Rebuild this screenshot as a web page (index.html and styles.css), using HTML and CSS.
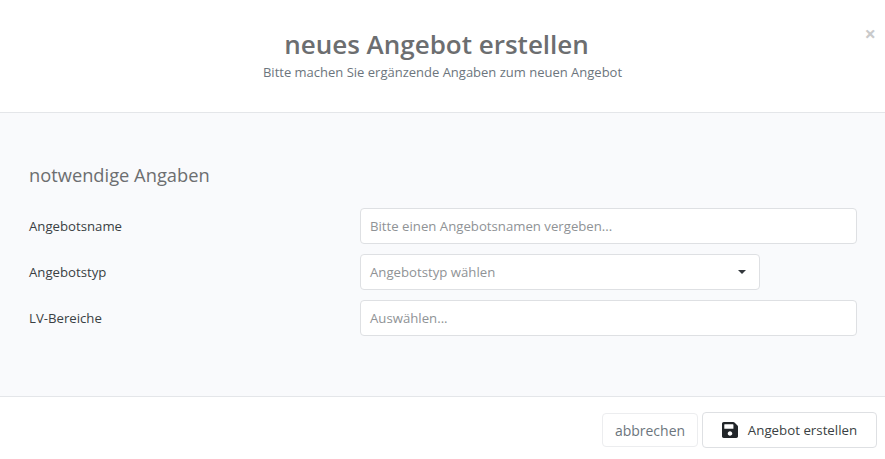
FILE: index.html
```html
<!DOCTYPE html>
<html lang="de">
<head>
<meta charset="utf-8">
<title>neues Angebot erstellen</title>
<link rel="stylesheet" href="styles.css">
</head>
<body>
<div class="modal">
  <header class="modal-header">
    <h1 class="modal-title">neues Angebot erstellen</h1>
    <p class="modal-subtitle">Bitte machen Sie ergänzende Angaben zum neuen Angebot</p>
    <span class="close">×</span>
  </header>
  <main class="modal-body">
    <h2 class="section-title">notwendige Angaben</h2>
    <div class="row">
      <label class="label">Angebotsname</label>
      <div class="field">Bitte einen Angebotsnamen vergeben...</div>
    </div>
    <div class="row">
      <label class="label">Angebotstyp</label>
      <div class="field field-select">Angebotstyp wählen<span class="caret"></span></div>
    </div>
    <div class="row">
      <label class="label">LV-Bereiche</label>
      <div class="field">Auswählen...</div>
    </div>
  </main>
  <footer class="modal-footer">
    <button class="btn btn-cancel">abbrechen</button>
    <button class="btn btn-save">
      <svg class="icon" viewBox="0 32 448 448" width="16" height="16"><path fill="#212529" d="M433.941 129.941l-83.882-83.882A48 48 0 0 0 316.118 32H48C21.490 32 0 53.490 0 80v352c0 26.510 21.490 48 48 48h352c26.510 0 48-21.490 48-48V163.882a48 48 0 0 0-14.059-33.941zM224 416c-35.346 0-64-28.654-64-64 0-35.346 28.654-64 64-64s64 28.654 64 64c0 35.346-28.654 64-64 64zm96-304.520V212c0 6.627-5.373 12-12 12H76c-6.627 0-12-5.373-12-12V108c0-6.627 5.373-12 12-12h228.520c3.183 0 6.235 1.264 8.485 3.515l3.480 3.480A11.996 11.996 0 0 1 320 111.480z"/></svg>
      Angebot erstellen
    </button>
  </footer>
</div>
</body>
</html>
```
FILE: styles.css
```css
* { box-sizing: border-box; }
html, body { margin: 0; padding: 0; }
body {
  width: 885px;
  height: 459px;
  overflow: hidden;
  background: #fff;
  font-family: "Open Sans", sans-serif;
}
.modal { display: flex; flex-direction: column; height: 459px; }
.modal-header {
  position: relative;
  height: 113px;
  padding-top: 27px;
  text-align: center;
  border-bottom: 1px solid #e4e6e9;
}
.modal-title {
  margin: 0 12px 0 0;
  font-size: 26px;
  line-height: 34px;
  font-weight: 600;
  color: #6c6e70;
}
.modal-subtitle {
  margin: 0;
  font-size: 13px;
  line-height: 22px;
  color: #6c757d;
}
.close {
  position: absolute;
  top: 22px;
  right: 9px;
  font-size: 20px;
  line-height: 24px;
  font-weight: 700;
  color: #c9cacb;
}
.modal-body {
  height: 283px;
  padding: 48px 28px 0 29px;
  background: #f9fafc;
}
.section-title {
  margin: 0 0 19px;
  font-size: 18.3px;
  line-height: 28px;
  font-weight: 400;
  color: #6c6e70;
}
.row {
  display: flex;
  align-items: center;
  height: 36px;
  margin-bottom: 10px;
}
.label {
  width: 331px;
  font-size: 13.2px;
  color: #3a3f43;
}
.field {
  flex: 1;
  height: 36px;
  padding: 0 9px;
  display: flex;
  align-items: center;
  background: #fff;
  border: 1px solid #dee0e3;
  border-radius: 4px;
  font-size: 13.2px;
  color: #8f9396;
}
.field-select {
  flex: 0 0 400px;
  justify-content: space-between;
  padding-right: 13px;
}
.caret {
  width: 0;
  height: 0;
  border-left: 4px solid transparent;
  border-right: 4px solid transparent;
  border-top: 4px solid #33383c;
}
.modal-footer {
  display: flex;
  flex: 1;
  justify-content: flex-end;
  align-items: center;
  gap: 4px;
  padding: 4px 8px 0 0;
  border-top: 1px solid #e4e6e9;
  background: #fff;
}
.btn {
  display: flex;
  align-items: center;
  justify-content: center;
  background: #fff;
  font-family: inherit;
  border-radius: 4px;
  padding: 0;
}
.btn-cancel {
  width: 96px;
  height: 34px;
  border: 1px solid #ecedef;
  font-size: 14px;
  color: #6c757d;
}
.btn-save {
  width: 175px;
  height: 36px;
  border: 1px solid #dee0e3;
  font-size: 13.3px;
  color: #3a3f43;
  gap: 10px;
}
.icon { display: block; }
```
